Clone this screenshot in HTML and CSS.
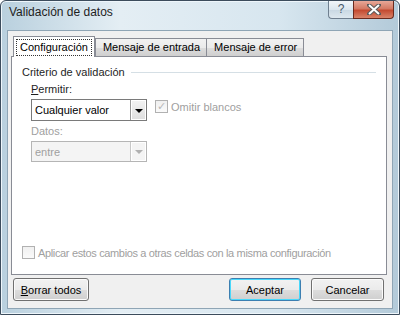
FILE: index.html
```html
<!DOCTYPE html>
<html>
<head>
<meta charset="utf-8">
<title>Validación de datos</title>
<link rel="stylesheet" href="styles.css">
</head>
<body>
	<div class="window">
		<div class="titlebar">
			<span class="title">Validación de datos</span>
			<div class="caption">
				<div class="cap-help">?</div>
				<div class="cap-close">
					<svg width="14" height="11" viewBox="0 0 14 11"><path d="M2 1 L12 10 M12 1 L2 10" stroke="#5a5a5a" stroke-width="4" stroke-linecap="square"/><path d="M2 1 L12 10 M12 1 L2 10" stroke="#fff" stroke-width="2"/></svg>
				</div>
			</div>
		</div>
		<div class="client">
			<div class="tabs">
				<div class="tab active"><span class="focus">Configuración</span></div>
				<div class="tab">Mensaje de entrada</div>
				<div class="tab">Mensaje de error</div>
			</div>
			<div class="panel">
				<div class="group-title"><span>Criterio de validación</span><i></i></div>
				<div class="field">
					<label><u>P</u>ermitir:</label>
					<div class="row">
						<div class="combo">
							<span class="value">Cualquier valor</span>
							<span class="arrow"><b></b></span>
						</div>
						<div class="check disabled checked"><span class="box">✓</span>Omitir blancos</div>
					</div>
				</div>
				<div class="field disabled">
					<label>Datos:</label>
					<div class="combo off">
						<span class="value">entre</span>
						<span class="arrow"><b></b></span>
					</div>
				</div>
				<div class="spacer"></div>
				<div class="check disabled apply"><span class="box"></span>Aplicar estos cambios a otras celdas con la misma configuración</div>
			</div>
			<div class="footer">
				<button class="btn"><u>B</u>orrar todos</button>
				<div class="grow"></div>
				<button class="btn default">Aceptar</button>
				<button class="btn">Cancelar</button>
			</div>
		</div>
	</div>
</body>
</html>
```
FILE: styles.css
```css
*{margin:0;padding:0;box-sizing:border-box;}
body{width:400px;height:315px;background:#fff;font-family:"Liberation Sans",Arial,sans-serif;font-size:11px;color:#000;overflow:hidden;}

.window{
	width:400px;
	height:315px;
	display:flex;
	flex-direction:column;
	border:1px solid #3c4c5c;
	border-radius:6px 6px 0 0;
	padding:0 6px 7px 6px;
	background:linear-gradient(90deg,#b9d0de 0%,#e4eef4 30%,#d7e6ef 70%,#b3cad9 100%);
	box-shadow:inset 0 0 0 1px #eef6fb;
}
.titlebar{
	height:29px;
	display:flex;
	align-items:flex-start;
	flex-shrink:0;
}
.title{margin:4px 0 0 2px;font-size:12px;color:#1e1e1e;}
.caption{margin-left:auto;display:flex;margin-right:-1px;}
.cap-help{
	width:25px;
	height:18px;
	border:1px solid #6f7f8f;
	border-top:0;
	border-right:0;
	border-radius:0 0 0 4px;
	background:linear-gradient(#f2f6f9,#dbe6ee 50%,#c8d7e2 51%,#dde8ef);
	text-align:center;
	line-height:16px;
	font-size:12px;
	color:#48586a;
}
.cap-close{
	width:41px;
	height:18px;
	border:1px solid #6a2a1e;
	border-top:0;
	border-radius:0 0 4px 0;
	background:linear-gradient(#e8a898,#d47a64 45%,#c44a30 55%,#d9846a);
	display:flex;
	align-items:center;
	justify-content:center;
}

.client{
	flex:1;
	display:flex;
	flex-direction:column;
	background:#f0f0f0;
	border:1px solid #8fa5b5;
	padding:5px 5px 0 3px;
}
.tabs{display:flex;align-items:flex-end;height:20px;padding-left:2px;position:relative;z-index:1;}
.tab{
	height:18px;
	padding:0 6px 0 7px;
	border:1px solid #898c95;
	border-bottom:0;
	margin-left:-1px;
	background:linear-gradient(#f2f2f2,#ebebeb 50%,#dddddd 51%,#cfcfcf);
	color:#000;
	line-height:17px;
	white-space:nowrap;
}
.tab.active{
	height:21px;
	margin-bottom:-1px;
	margin-left:0;
	padding:1px 2px 0;
	background:#fff;
	position:relative;
	z-index:2;
}
.tab.active + .tab{margin-left:0;}
.focus{display:inline-block;border:1px dotted #333;padding:0 3px;line-height:15px;margin-top:1px;}

.panel{
	height:219px;
	background:#fff;
	border:1px solid #898c95;
	padding:9px 10px 15px 10px;
	display:flex;
	flex-direction:column;
}
.group-title{display:flex;align-items:center;color:#1e1e1e;}
.group-title i{flex:1;height:1px;background:#d5dfe5;margin:1px 0 0 6px;}

.field{margin:4px 0 0 9px;}
.field label{display:block;line-height:14px;color:#1e1e1e;}
.field.disabled{margin-top:3px;}
.field.disabled label{color:#a0a0a0;}
.row{display:flex;align-items:flex-start;margin-top:3px;}

.combo{
	width:116px;
	height:22px;
	border:1px solid #7a7a7a;
	display:flex;
	align-items:center;
	background:#fff;
}
.combo .value{flex:1;padding-left:3px;}
.combo .arrow{
	width:16px;
	height:20px;
	border-left:1px solid #9a9a9a;
	background:linear-gradient(#f3f3f3,#dedede);
	display:flex;
	align-items:center;
	justify-content:center;
	box-shadow:inset 0 0 0 1px #fff;
}
.combo .arrow b{border:4px solid transparent;border-top:4px solid #000;border-bottom:0;margin-top:1px;}
.combo.off{height:21px;width:116px;border-color:#b5b5b5;background:#f4f4f4;margin-top:3px;}
.combo.off .value{color:#a0a0a0;}
.combo.off .arrow{background:#f4f4f4;border-left-color:#c8c8c8;height:19px;}
.combo.off .arrow b{border-top-color:#b0b0b0;}

.check{display:flex;align-items:center;color:#1e1e1e;}
.check .box{
	width:13px;
	height:13px;
	border:1px solid #b1b1b1;
	background:linear-gradient(#f0f0f0,#fafafa);
	margin-right:3px;
	font-size:11px;
	line-height:11px;
	text-align:center;
	color:#b8b8b8;
}
.check.disabled{color:#a0a0a0;}
.row .check{margin:1px 0 0 8px;}
.apply{letter-spacing:-0.35px;}
.spacer{flex:1;}

.footer{display:flex;align-items:flex-start;height:33px;padding:3px 3px 0 2px;}
.grow{flex:1;}
.btn{
	height:23px;
	font-family:inherit;
	font-size:11px;
	color:#000;
	border:1px solid #707070;
	border-radius:3px;
	background:linear-gradient(#f2f2f2,#ebebeb 50%,#dddddd 51%,#cfcfcf);
	box-shadow:inset 0 0 0 1px #fbfbfb;
	width:75px;
}
.btn:first-child{width:76px;}
.btn.default{
	width:72px;
	border-color:#3c7fb1;
	box-shadow:inset 0 0 0 1px #48d8fb;
	margin-right:10px;
}
.btn + .btn{width:73px;}
```
